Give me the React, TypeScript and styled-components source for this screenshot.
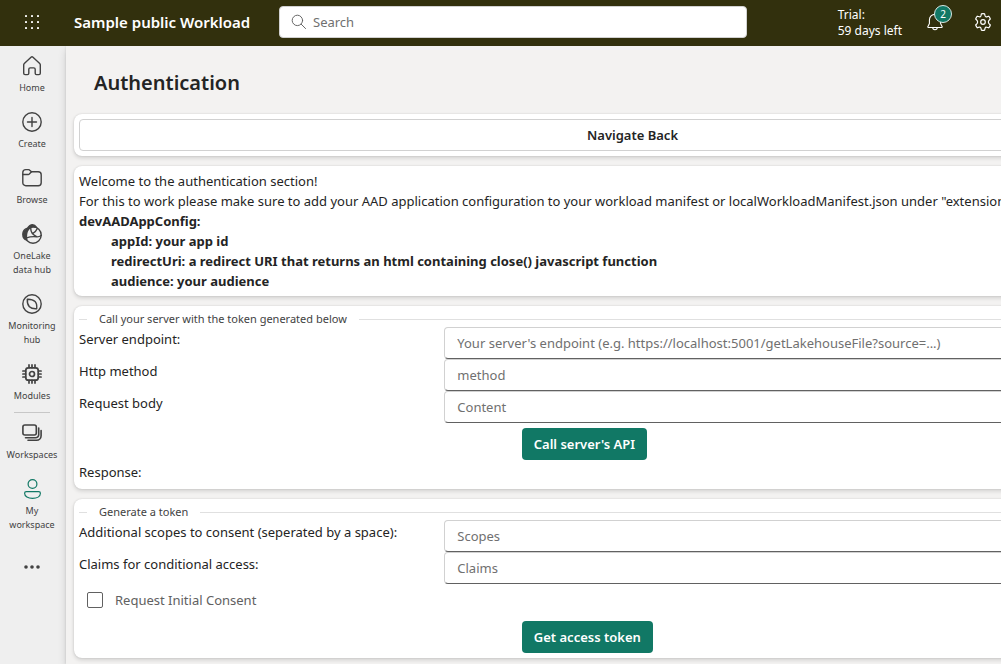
import React from "react";
import styled, { createGlobalStyle } from "styled-components";

const GlobalStyle = createGlobalStyle`
  *, *::before, *::after { box-sizing: border-box; }
  body {
    margin: 0;
    overflow: hidden;
    background: #f3f2f1;
    color: #242424;
    font-family: "Segoe UI", "Noto Sans", "Open Sans", sans-serif;
    font-size: 13px;
    line-height: 20px;
  }
  button, input { font: inherit; color: inherit; }
`;

const Shell = styled.div`
  display: flex;
  flex-direction: column;
  height: 100vh;
`;

const TopBar = styled.header`
  display: flex;
  align-items: center;
  flex: none;
  height: 46px;
  padding: 0 8px 2px 22px;
  background: #32300d;
  color: #ffffff;
`;

const IconButton = styled.button`
  display: flex;
  position: relative;
  flex: none;
  padding: 0;
  border: 0;
  background: none;
  color: inherit;
`;

const ProductName = styled.a`
  flex: none;
  width: 205px;
  padding-left: 32px;
  color: inherit;
  font-size: 15px;
  font-weight: 600;
  text-decoration: none;
  white-space: nowrap;
`;

const SearchBox = styled.label`
  display: flex;
  flex: 0 1 468px;
  align-items: center;
  gap: 6px;
  height: 32px;
  margin-left: 32px;
  padding: 0 11px;
  border: 1px solid #d1d1d1;
  border-radius: 4px;
  background: #ffffff;
  color: #616161;
`;

const SearchInput = styled.input`
  flex: 1;
  min-width: 0;
  padding: 0;
  border: 0;
  outline: 0;
  background: none;
  &::placeholder { color: #707070; opacity: 1; }
`;

const TopActions = styled.div`
  display: flex;
  align-items: center;
  gap: 29px;
  margin-left: auto;
`;

const Account = styled.div`
  display: flex;
  align-items: center;
  gap: 24px;
`;

const Trial = styled.div`
  padding-top: 2px;
  font-size: 12px;
  line-height: 16px;
`;

const Badge = styled.span`
  position: absolute;
  top: -8px;
  right: -8px;
  width: 18px;
  height: 18px;
  border: 1px solid #d9e8e4;
  border-radius: 50%;
  background: #117865;
  font-size: 10px;
  line-height: 16px;
  text-align: center;
`;

const Body = styled.div`
  display: flex;
  flex: 1;
  min-height: 0;
  overflow: hidden;
`;

const SideNav = styled.nav`
  display: flex;
  flex: none;
  flex-direction: column;
  align-items: center;
  gap: 1px;
  width: 66px;
  padding: 2px 2px 0 0;
  background: #efefef;
`;

const NavLink = styled.a`
  display: flex;
  flex-direction: column;
  align-items: center;
  gap: 5px;
  width: 100%;
  padding: 8px 4px;
  color: #424242;
  font-size: 9px;
  line-height: 14px;
  text-align: center;
  text-decoration: none;
`;

const NavDivider = styled.hr`
  width: 36px;
  height: 1px;
  margin: 0 0 1px;
  border: 0;
  background: #c7c7c7;
`;

const MoreButton = styled(IconButton)`
  margin-top: 16px;
  color: #424242;
`;

const Main = styled.main`
  flex: 1;
  z-index: 1;
  min-width: 0;
  overflow: hidden;
  background: #f3f2f1;
  box-shadow: 0 4px 8px rgba(0, 0, 0, 0.14), 0 0 2px rgba(0, 0, 0, 0.12);
`;

const Content = styled.div`
  display: flex;
  flex-direction: column;
  gap: 10px;
  min-width: 1133px;
  padding: 0 8px 6px;
`;

const Title = styled.h1`
  margin: 0;
  padding: 23px 20px 7px;
  font-size: 20px;
  font-weight: 600;
  line-height: 28px;
`;

const Card = styled.section`
  padding: 5px;
  border-radius: 8px;
  background: #ffffff;
  box-shadow: 0 2px 4px rgba(0, 0, 0, 0.14), 0 0 2px rgba(0, 0, 0, 0.12);
`;

const BackButton = styled.button`
  display: block;
  width: 100%;
  height: 32px;
  border: 1px solid #d1d1d1;
  border-radius: 4px;
  background: #ffffff;
  font-weight: 600;
`;

const Line = styled.p<{ $bold?: boolean; $indent?: boolean }>`
  margin: 0;
  padding-left: ${(p) => (p.$indent ? 32 : 0)}px;
  font-weight: ${(p) => (p.$bold ? 700 : 400)};
  white-space: nowrap;
`;

const Divider = styled.h2`
  display: flex;
  align-items: center;
  gap: 12px;
  margin: 0;
  color: #424242;
  font-size: 11px;
  font-weight: 400;
  line-height: 16px;
  &::before, &::after {
    content: "";
    width: 8px;
    height: 1px;
    background: #e0e0e0;
  }
  &::after { flex: 1; }
`;

const Row = styled.div`
  display: grid;
  grid-template-columns: 33% 1fr;
`;

const Label = styled.label`
  padding: 2px 0;
`;

const Response = styled.div`
  padding: 2px 0;
`;

const TextBox = styled.input`
  height: 32px;
  min-width: 0;
  padding: 0 12px;
  border: 1px solid #d1d1d1;
  border-bottom-color: #616161;
  border-radius: 4px;
  background: #ffffff;
  &::placeholder { color: #707070; opacity: 1; }
`;

const PrimaryButton = styled.button`
  display: block;
  height: 32px;
  margin: 5px 0 0 40%;
  padding: 0 12px;
  border: 0;
  border-radius: 4px;
  background: #117865;
  color: #ffffff;
  font-weight: 600;
`;

const CheckLabel = styled.label`
  display: flex;
  align-items: center;
  gap: 12px;
  height: 32px;
  padding-left: 8px;
  color: #616161;
`;

const CheckBox = styled.input`
  appearance: none;
  width: 16px;
  height: 16px;
  margin: 0;
  border: 1px solid #616161;
  border-radius: 2px;
  background: #ffffff;
`;

function Icon({ size = 20, color = "currentColor", stroke = 1.2, children }: { size?: number; color?: string; stroke?: number; children: React.ReactNode }) {
  return (
    <svg width={size} height={size} viewBox="0 0 20 20" fill="none" stroke={color} strokeWidth={stroke} strokeLinecap="round" strokeLinejoin="round" aria-hidden="true">
      {children}
    </svg>
  );
}

const navItems = [
  {
    label: "Home",
    icon: <path d="M9 1.200a1.500 1.500 0 0 1 2 0l6.700 6.200c.4.400.6.800.6 1.400v8.400c0 .9-.5 1.400-1.400 1.400h-2.400c-.8 0-1.300-.5-1.300-1.300v-4c0-.9-.5-1.400-1.400-1.400H8.200c-.9 0-1.400.5-1.400 1.400v4c0 .8-.5 1.300-1.300 1.300H3.100c-.9 0-1.400-.5-1.400-1.400V8.800c0-.6.2-1 .6-1.400z" />,
  },
  {
    label: "Create",
    icon: <><circle cx="10" cy="10" r="9.200" /><path d="M10 5.500v9M5.500 10h9" /></>,
  },
  {
    label: "Browse",
    icon: <><path d="M.8 5v9.700a3 3 0 0 0 3 3h12.400a3 3 0 0 0 3-3V6.800a3 3 0 0 0-3-3H9.500L7.400 1.900c-.3-.2-.6-.3-1-.3H3.800a3 3 0 0 0-3 3z" /><path d="M.8 6.500h5.400c.5 0 .8-.1 1.100-.4l2.200-2.300" /></>,
  },
  {
    label: "OneLake data hub",
    icon: (
      <>
        <circle cx="11" cy="11" r="8.200" />
        <path d="M5.500 4.200C7 1.800 8.800.7 10.500.7c1.600 0 3 1 4 2.600-2.500-.8-4.800-.6-6.500.5-2.400 2-3.700 5-3.600 9.200l.4 3.200C2.300 15.300.8 13 .8 10.200c0-2.700 1.900-5.100 4.700-6z" fill="currentColor" />
        <path d="M8.800 4c-.3 3.800 1.800 6.800 5.800 8.600M15.300 4.500c-1 2.400-2.400 4-4.800 5.200M4.600 13.800c3.500-1.200 6.800-1.300 9.900-1 1.800.2 3.300-.3 4.700-1.300" />
      </>
    ),
  },
  {
    label: "Monitoring hub",
    icon: <><circle cx="10" cy="10" r="9.200" /><path d="M5.300 5.300c3.600-.1 6.100.6 7.800 2.300 1.500 1.600 1.900 3.900 1.600 7.100-3.200.2-5.600-.3-7.300-2-1.700-1.700-2.300-4.100-2.100-7.400z" /></>,
  },
  {
    label: "Modules",
    icon: (
      <g strokeWidth="1.700">
        <rect x="3.800" y="3.800" width="12.400" height="12.400" rx="2.500" />
        <circle cx="10" cy="10" r="2.500" />
        <path d="M7 .9v2.700M10 .9v2.700M13 .9v2.700M7 16.400v2.700M10 16.400v2.700M13 16.400v2.700M.9 7h2.700M.9 10h2.700M.9 13h2.700M16.400 7h2.700M16.400 10h2.700M16.400 13h2.700" />
      </g>
    ),
  },
];

const workspaceItems = [
  {
    label: "Workspaces",
    icon: <g strokeWidth="1.600"><rect x=".9" y="2" width="13.400" height="10" rx="2" /><path d="M3.500 14.700h10.200a3 3 0 0 0 3-3V5M6 17.200h8.600a4.500 4.500 0 0 0 4.500-4.500V7.500" /></g>,
  },
  {
    label: "My workspace",
    color: "#117865",
    icon: <><circle cx="10.500" cy="5" r="4.400" /><path d="M4.300 12.600h12.400c1 0 1.700.7 1.700 1.600 0 3.200-3.500 5.200-7.900 5.200s-7.900-2-7.900-5.200c0-.9.700-1.600 1.700-1.600z" /></>,
  },
];

export default function App() {
  return (
    <Shell>
      <GlobalStyle />
      <TopBar>
        <IconButton aria-label="App launcher">
          <Icon>
            <g fill="currentColor" stroke="none">
              {[3, 9, 15].map((y) => [3, 9, 15].map((x) => <rect key={`${x}-${y}`} x={x} y={y} width="2" height="2" rx=".4" />))}
            </g>
          </Icon>
        </IconButton>
        <ProductName href="#">Sample public Workload</ProductName>
        <SearchBox>
          <Icon size={16}>
            <circle cx="8" cy="8" r="6.500" />
            <path d="m12.800 12.800 5.400 5.400" />
          </Icon>
          <SearchInput placeholder="Search" aria-label="Search" />
        </SearchBox>
        <TopActions>
          <Account>
            <Trial>Trial:<br />59 days left</Trial>
            <IconButton aria-label="Notifications">
              <Icon size={18}>
                <path d="M10 1.500A6.200 6.200 0 0 0 3.800 7.700v4L2 15.200c-.2.500.1.900.6.900h14.800c.5 0 .8-.4.600-.9l-1.800-3.500v-4A6.200 6.200 0 0 0 10 1.500zM7.500 16.200a2.500 2.500 0 0 0 5 0" />
              </Icon>
              <Badge>2</Badge>
            </IconButton>
          </Account>
          <IconButton aria-label="Settings">
            <Icon>
              <path d="M8.400 1.900c1-.3 2.200-.3 3.200 0l.5 2c.2.700.9 1.100 1.600.9l2-.6c.8.800 1.300 1.700 1.600 2.800l-1.500 1.700c-.5.700-.5 1.900 0 2.600l1.500 1.700c-.3 1.100-.8 2-1.600 2.800l-2-.6c-.7-.2-1.400.2-1.600.9l-.5 2c-1 .3-2.200.3-3.200 0l-.5-2c-.2-.7-.9-1.100-1.600-.9l-2 .6A7 7 0 0 1 2.700 13l1.500-1.700c.5-.7.5-1.900 0-2.600L2.700 7c.3-1.100.8-2 1.600-2.800l2 .6c.7.200 1.400-.2 1.600-.9z" />
              <circle cx="10" cy="10" r="2.300" />
            </Icon>
          </IconButton>
        </TopActions>
      </TopBar>
      <Body>
        <SideNav aria-label="Main">
          {navItems.map((item) => (
            <NavLink href="#" key={item.label}>
              <Icon stroke={1.4}>{item.icon}</Icon>
              {item.label}
            </NavLink>
          ))}
          <NavDivider />
          {workspaceItems.map((item) => (
            <NavLink href="#" key={item.label}>
              <Icon color={item.color}>{item.icon}</Icon>
              {item.label}
            </NavLink>
          ))}
          <MoreButton aria-label="More">
            <Icon>
              <g fill="currentColor" stroke="none">
                <circle cx="4" cy="10" r="1.800" />
                <circle cx="10" cy="10" r="1.800" />
                <circle cx="16" cy="10" r="1.800" />
              </g>
            </Icon>
          </MoreButton>
        </SideNav>
        <Main>
          <Content>
            <Title>Authentication</Title>
            <Card>
              <BackButton>Navigate Back</BackButton>
            </Card>
            <Card>
              <Line>Welcome to the authentication section!</Line>
              <Line>For this to work please make sure to add your AAD application configuration to your workload manifest or localWorkloadManifest.json under "extension"</Line>
              <Line $bold>devAADAppConfig:</Line>
              <Line $bold $indent>appId: your app id</Line>
              <Line $bold $indent>redirectUri: a redirect URI that returns an html containing close() javascript function</Line>
              <Line $bold $indent>audience: your audience</Line>
            </Card>
            <Card>
              <Divider>Call your server with the token generated below</Divider>
              <Row>
                <Label htmlFor="endpoint">Server endpoint:</Label>
                <TextBox id="endpoint" placeholder="Your server's endpoint (e.g. https://localhost:5001/getLakehouseFile?source=...)" />
              </Row>
              <Row>
                <Label htmlFor="method">Http method</Label>
                <TextBox id="method" placeholder="method" />
              </Row>
              <Row>
                <Label htmlFor="body">Request body</Label>
                <TextBox id="body" placeholder="Content" />
              </Row>
              <PrimaryButton>Call server's API</PrimaryButton>
              <Response>Response:</Response>
            </Card>
            <Card>
              <Divider>Generate a token</Divider>
              <Row>
                <Label htmlFor="scopes">Additional scopes to consent (seperated by a space):</Label>
                <TextBox id="scopes" placeholder="Scopes" />
              </Row>
              <Row>
                <Label htmlFor="claims">Claims for conditional access:</Label>
                <TextBox id="claims" placeholder="Claims" />
              </Row>
              <CheckLabel>
                <CheckBox type="checkbox" />
                Request Initial Consent
              </CheckLabel>
              <PrimaryButton>Get access token</PrimaryButton>
            </Card>
          </Content>
        </Main>
      </Body>
    </Shell>
  );
}
